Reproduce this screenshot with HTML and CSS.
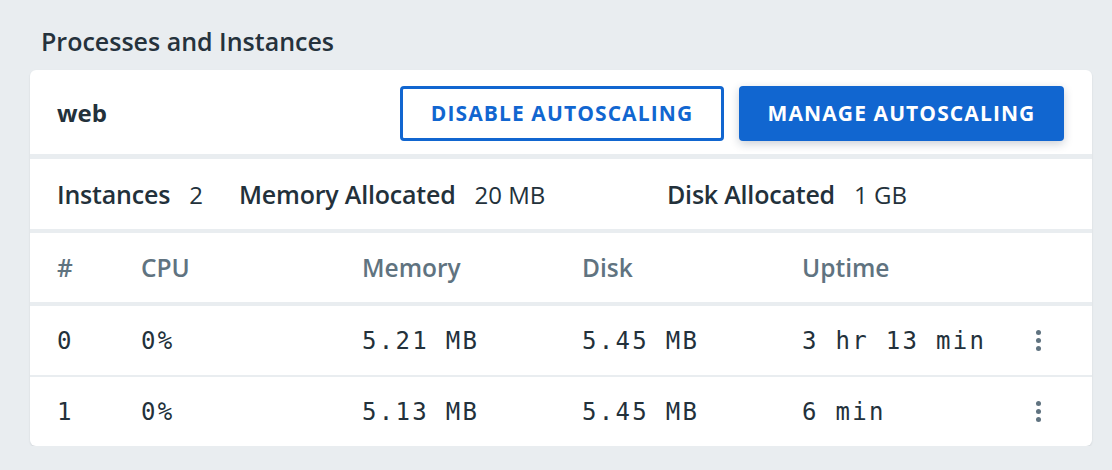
FILE: index.html
```html
<!DOCTYPE html>
<html>
<head>
<meta charset="utf-8">
<link rel="stylesheet" href="styles.css">
</head>
<body>
<h2 class="title">Processes and Instances</h2>
<section class="card">
  <div class="card-head">
    <div class="proc-name">web</div>
    <div class="actions">
      <button class="btn btn-outline">DISABLE AUTOSCALING</button>
      <button class="btn btn-solid">MANAGE AUTOSCALING</button>
    </div>
  </div>
  <div class="info">
    <div class="info-item"><span class="info-label">Instances</span><span class="info-value">2</span></div>
    <div class="info-item"><span class="info-label">Memory Allocated</span><span class="info-value">20 MB</span></div>
    <div class="info-item"><span class="info-label">Disk Allocated</span><span class="info-value">1 GB</span></div>
  </div>
  <div class="trow thead">
    <div>#</div><div>CPU</div><div>Memory</div><div>Disk</div><div>Uptime</div><div></div>
  </div>
  <div class="trow tbody first">
    <div>0</div><div>0%</div><div>5.21 MB</div><div>5.45 MB</div><div>3 hr 13 min</div>
    <div class="kebab"><i></i><i></i><i></i></div>
  </div>
  <div class="trow tbody">
    <div>1</div><div>0%</div><div>5.13 MB</div><div>5.45 MB</div><div>6 min</div>
    <div class="kebab"><i></i><i></i><i></i></div>
  </div>
</section>
</body>
</html>
```

FILE: styles.css
```css
* { box-sizing: border-box; }
html, body { margin: 0; }
body {
  background: #e9edf0;
  padding: 26px 20px 0 30px;
  font-family: "Open Sans", "Noto Sans", sans-serif;
  color: #23313b;
}
.title {
  margin: 0 0 14px 11px;
  font-size: 25px;
  font-weight: 600;
  line-height: 30px;
  color: #25323c;
}
.card {
  width: 1062px;
  background: #fff;
  border-radius: 6px;
  box-shadow: 0 1px 2px rgba(30, 45, 60, 0.12);
  overflow: hidden;
}
.card-head {
  height: 84px;
  display: flex;
  align-items: center;
  justify-content: space-between;
  padding: 0 28px 0 27px;
}
.proc-name {
  font-size: 24px;
  font-weight: 700;
}
.actions {
  display: flex;
  gap: 15px;
  margin-top: 2px;
}
.btn {
  height: 55px;
  border-radius: 4px;
  font-family: inherit;
  font-size: 21px;
  font-weight: 700;
  letter-spacing: 1.1px;
  cursor: pointer;
}
.btn-outline {
  width: 324px;
  background: #fff;
  color: #1166d0;
  border: 3px solid #1166d0;
}
.btn-solid {
  width: 325px;
  background: #1166d0;
  color: #fff;
  border: 0;
  box-shadow: 0 3px 10px rgba(20, 40, 70, 0.22);
}
.info {
  border-top: 5px solid #e9edf0;
  height: 75px;
  display: grid;
  grid-template-columns: 182px 428px auto;
  align-items: center;
  padding-left: 27px;
}
.info-item { display: flex; gap: 19px; align-items: baseline; }
.info-label { font-size: 25px; font-weight: 600; letter-spacing: -0.2px; }
.info-value { font-size: 24px; font-weight: 400; }
.trow {
  display: grid;
  grid-template-columns: 84px 221px 220px 220px 1fr 20px;
  align-items: center;
  padding: 0 44px 0 27px;
}
.thead {
  border-top: 4px solid #e9edf0;
  height: 73px;
  font-size: 24.5px;
  font-weight: 600;
  color: #607380;
}
.tbody {
  border-top: 2px solid #e9edf0;
  height: 71px;
  font-family: "DejaVu Sans Mono", "Liberation Mono", monospace;
  font-size: 24px;
  letter-spacing: 2.3px;
  color: #23313b;
}
.tbody.first {
  border-top-width: 4px;
  height: 73px;
}
.kebab {
  display: flex;
  flex-direction: column;
  align-items: center;
  gap: 3px;
}
.kebab i {
  display: block;
  width: 5px;
  height: 5px;
  border-radius: 50%;
  background: #607380;
}
```
